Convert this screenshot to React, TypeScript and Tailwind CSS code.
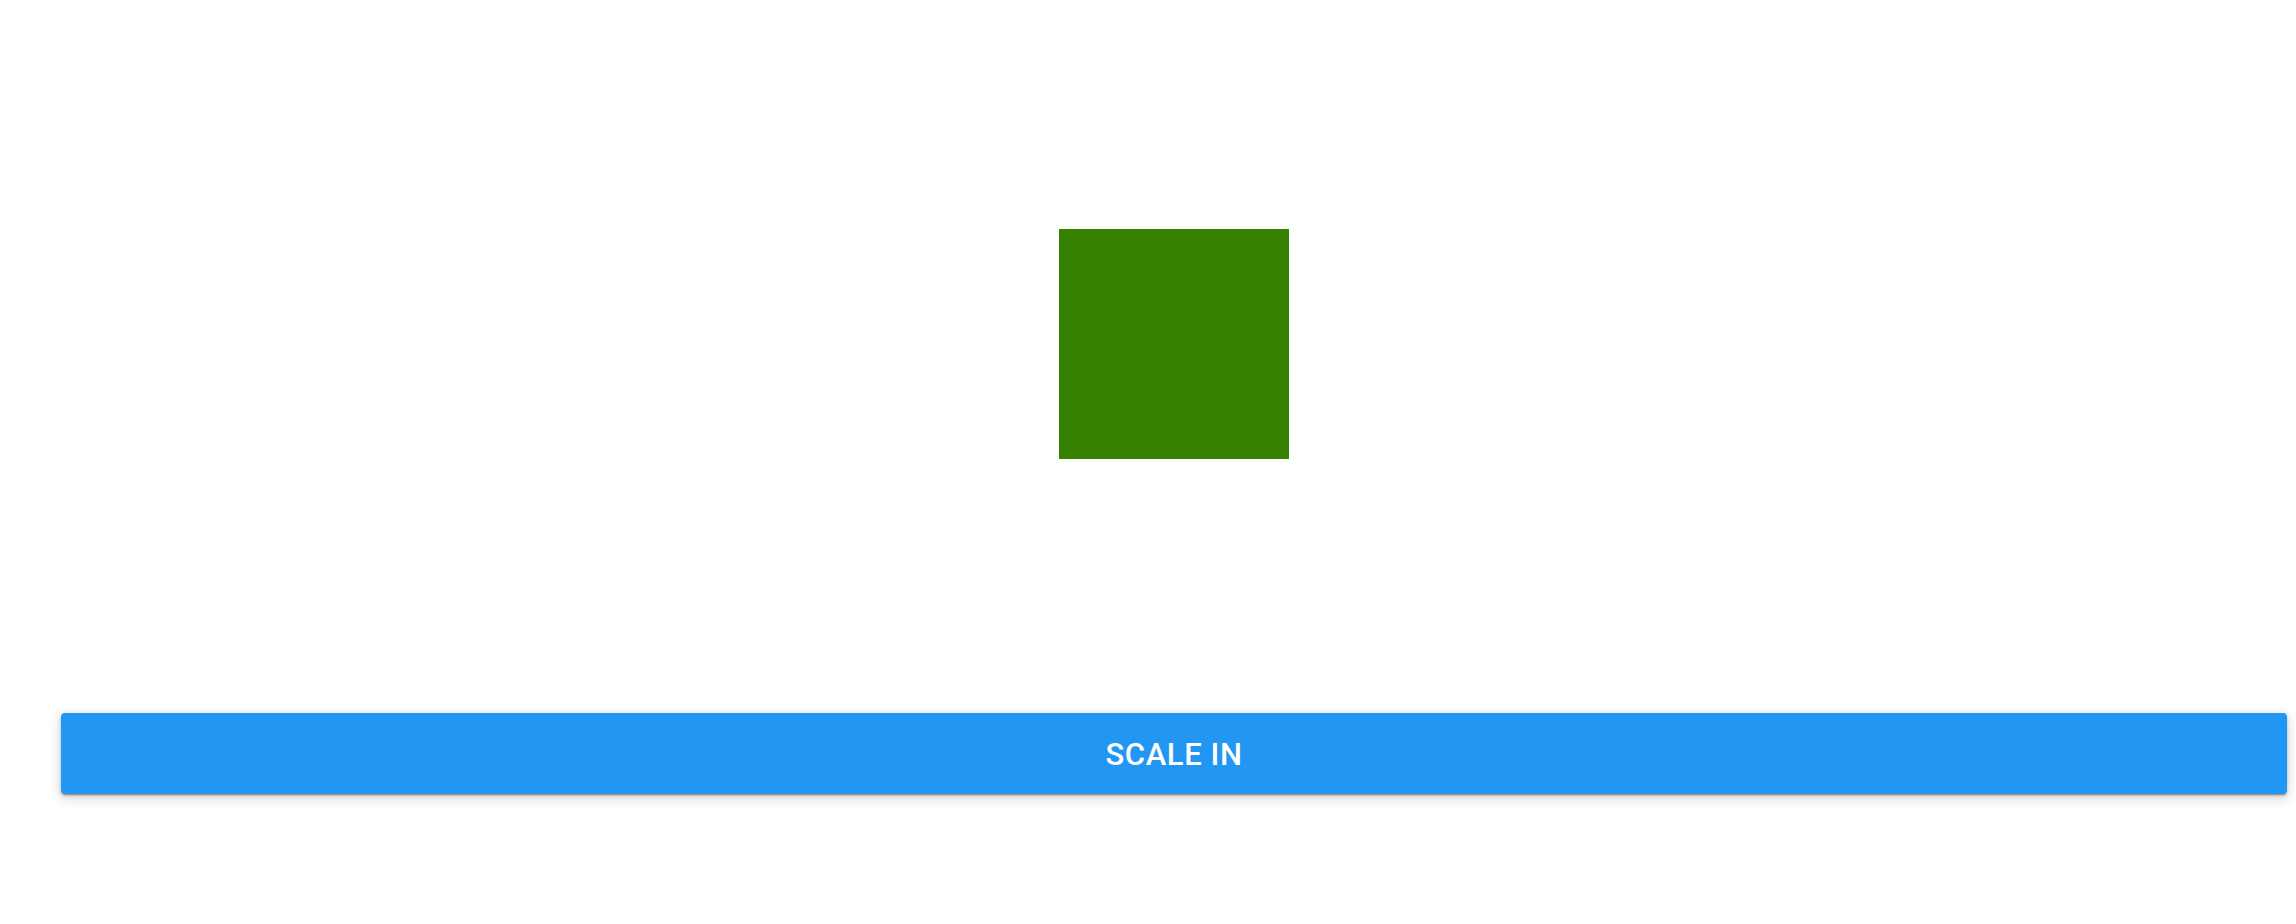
import React, { useState } from "react";

const App: React.FC = () => {
  const [scaled, setScaled] = useState(false);

  return (
    <div className="min-h-screen bg-white pl-[61px] pr-[9px] pt-[229px] font-['Roboto',sans-serif]">
      {/* 상자 */}
      <div className="flex justify-center">
        <div
          className={`h-[230px] w-[230px] bg-[#358000] transition-transform ${
            scaled ? "scale-0" : "scale-100"
          }`}
        ></div>
      </div>

      {/* 버튼 */}
      <button
        onClick={() => setScaled(!scaled)}
        className="mt-[254px] flex h-[81px] w-full items-center justify-center rounded-[4px] bg-[#2196f3] pt-[4px] text-[31px] font-medium tracking-[0.6px] text-white shadow-[0_3px_1px_-2px_rgba(0,0,0,0.2),0_2px_2px_0_rgba(0,0,0,0.14),0_1px_5px_0_rgba(0,0,0,0.12),0_4px_12px_2px_rgba(0,0,0,0.12)]"
      >
        {scaled ? "SCALE OUT" : "SCALE IN"}
      </button>
    </div>
  );
};

export default App;
